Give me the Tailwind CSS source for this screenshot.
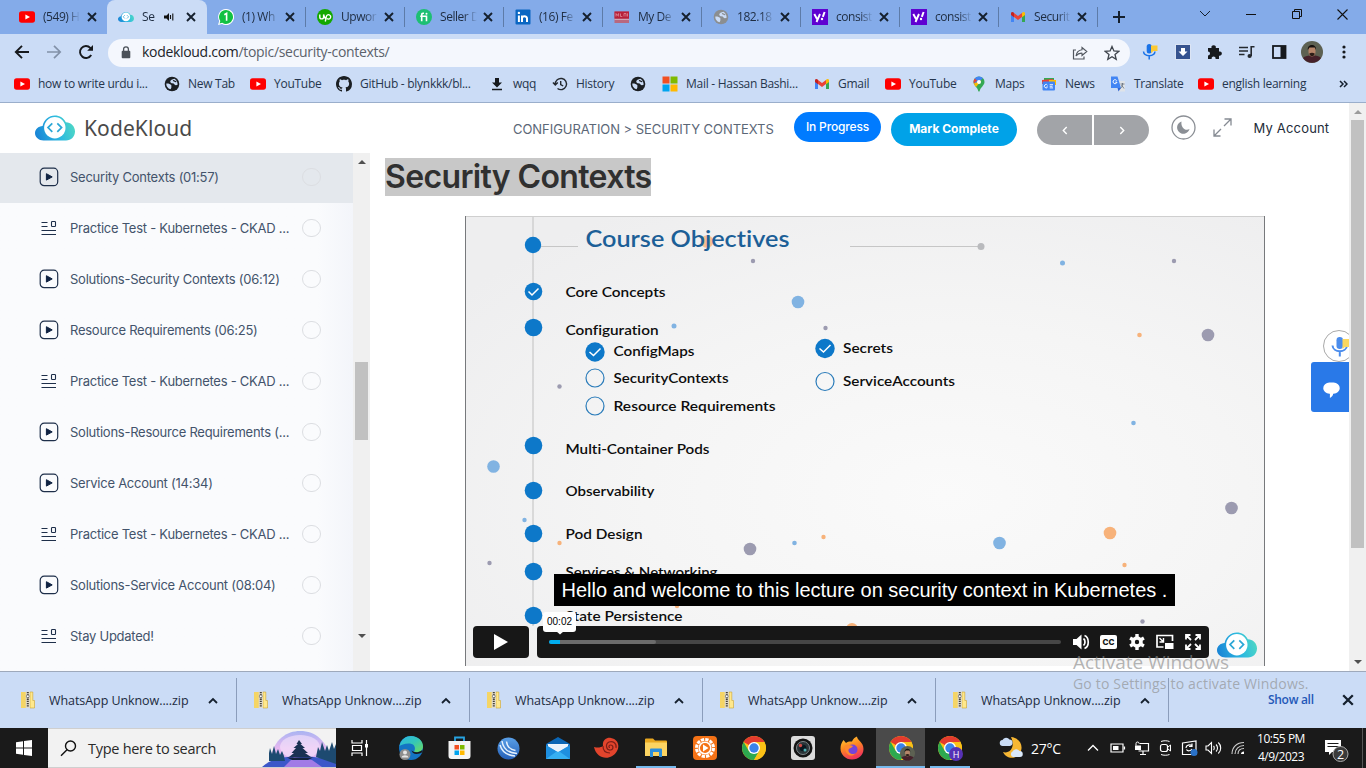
<!DOCTYPE html>
<html lang="en">
<head>
<meta charset="utf-8">
<title>Security Contexts - KodeKloud</title>
<script src="https://cdn.jsdelivr.net/npm/@tailwindcss/browser@4"></script>
</head>
<body class="w-[1366px] h-[768px] overflow-hidden bg-white font-['Open_Sans','Noto_Sans',sans-serif] text-[12px] text-[#1f2937]">

<svg width="0" height="0" class="absolute">
  <defs>
    <linearGradient id="kg" x1="0" y1="0.6" x2="1" y2="0.4"><stop offset="0" stop-color="#1a86d6"/><stop offset="0.55" stop-color="#2cb9e0"/><stop offset="1" stop-color="#4fd8c4"/></linearGradient>
    <linearGradient id="edg" x1="0" y1="0" x2="1" y2="1"><stop offset="0" stop-color="#2bb5e8"/><stop offset="0.5" stop-color="#35c6b8"/><stop offset="1" stop-color="#6fdc5a"/></linearGradient>
    <linearGradient id="bub" x1="0" y1="0" x2="0" y2="1"><stop offset="0" stop-color="#5aa0e8"/><stop offset="1" stop-color="#2560b8"/></linearGradient>
    <linearGradient id="ff" x1="0" y1="0" x2="0.4" y2="1"><stop offset="0" stop-color="#ffd43a"/><stop offset="0.5" stop-color="#ff8a1f"/><stop offset="1" stop-color="#f0365a"/></linearGradient>
    <linearGradient id="sky" x1="0" y1="0" x2="0" y2="1"><stop offset="0" stop-color="#a9b4f2"/><stop offset="0.5" stop-color="#e8b8f0"/><stop offset="1" stop-color="#c7a6ee"/></linearGradient>
    <radialGradient id="slide" cx="0.6" cy="0.62" r="0.75"><stop offset="0" stop-color="#fafafa"/><stop offset="0.5" stop-color="#f5f5f5"/><stop offset="1" stop-color="#eeeeef"/></radialGradient>
  </defs>
  <symbol id="cloud" viewBox="0 0 40 26">
    <path d="M8.500 25.500C3.800 25.500 0 22.300 0 18.300C0 14.500 3.300 11.300 7.600 11.100C8.800 4.700 13.800 0.500 19.800 0.500C24.800 0.500 28.800 3.200 30.800 7.300C36 7.300 40 11.500 40 16.500C40 21.500 36.200 25.500 31 25.500Z" fill="url(#kg)"/>
    <circle cx="19.800" cy="12.700" r="10.700" fill="#fff"/>
    <path d="M17.300 8.300L13 12.600L17.300 16.900M22.300 8.300L26.600 12.600L22.300 16.900" fill="none" stroke="#2ba7d6" stroke-width="1.700"/>
  </symbol>
  <symbol id="yt" viewBox="0 0 16 16"><rect y="2.300" width="16" height="11.400" rx="2.600" fill="#f00"/><path d="M6.400 5.500L11 8L6.400 10.500Z" fill="#fff"/></symbol>
  <symbol id="wa" viewBox="0 0 16 16"><path d="M8 0A8 8 0 1 1 4 14.900L0 16L1.200 12A8 8 0 0 1 8 0Z" fill="#fff"/><path d="M8 1.100A6.900 6.900 0 1 1 4.200 13.700L1.600 14.400L2.300 11.900A6.900 6.900 0 0 1 8 1.100Z" fill="#12c143"/><path d="M6.300 5.800L8.600 4.400V11.800" stroke="#fff" stroke-width="1.600" fill="none"/></symbol>
  <symbol id="up" viewBox="0 0 16 16"><circle cx="8" cy="8" r="8" fill="#14a800"/><path d="M2.800 5.500V8A1.900 1.900 0 0 0 6.600 8V5.500C7 7.500 8 9.300 9 10M8.300 12.500L9.300 7.600A2.200 2.200 0 1 1 10 9.500" stroke="#fff" stroke-width="1.400" fill="none"/></symbol>
  <symbol id="fi" viewBox="0 0 16 16"><circle cx="8" cy="8" r="8" fill="#1dbf73"/><path d="M5.700 12.300V5.900C5.700 4.600 6.500 4.100 8 4.200M4.200 7.200H10.500V12.300" stroke="#fff" stroke-width="1.600" fill="none"/><circle cx="10.500" cy="4.700" r="1" fill="#fff"/></symbol>
  <symbol id="in" viewBox="0 0 16 16"><rect x="0.500" y="0.500" width="15" height="15" rx="1" fill="#0a66c2"/><path d="M3.900 6.500V13M7 13V6.500M7 9.500C7 6.700 12 6.500 12 9.500V13" stroke="#fff" stroke-width="2" fill="none"/><circle cx="3.900" cy="3.900" r="1.200" fill="#fff"/></symbol>
  <symbol id="md" viewBox="0 0 16 16"><rect x="0.500" y="2.500" width="14.500" height="11.500" fill="#b8687f"/><rect x="0.500" y="2.500" width="14.500" height="7" fill="#b8203a"/><path d="M2 7.500V4.500L3.300 6.500L4.600 4.500V7.500M6.500 4.500V7.500H8.300M10 7.500V4.500H12V7.500M13.500 4.300V7.500" stroke="#e39aa6" stroke-width="0.700" fill="none"/><path d="M0.500 10.500H15" stroke="#d3a3b3" stroke-width="1"/></symbol>
  <symbol id="globe" viewBox="0 0 16 16"><circle cx="8" cy="8" r="7.300" fill="currentColor"/><path d="M2.300 7.500C4.500 7.300 6 7.800 7.500 9.300C6.800 10 8.300 11 6.500 13.300L4.600 12.400C3 11 2.200 9.500 2.300 7.500ZM10.500 2.700C8.500 3 6 4.200 6.300 6C7 8 9.800 6.700 10.300 8.300C11 9.700 13 9.500 13.700 8.500C13.500 5.800 12.300 3.700 10.500 2.700Z" fill="#cbdcf6"/><path d="M9 4.600C10.500 4.300 10.500 6 12.300 5.500" stroke="currentColor" stroke-width="1.200" fill="none"/></symbol>
  <symbol id="yh" viewBox="0 0 16 16"><rect width="16" height="16" fill="#5f01d1"/><path d="M2.300 5L5 10M8 5L4.500 13" stroke="#fff" stroke-width="1.900"/><path d="M12.600 3L10.800 7.800" stroke="#fff" stroke-width="2"/><circle cx="10" cy="10" r="1.200" fill="#fff"/></symbol>
  <symbol id="gm" viewBox="0 0 16 16"><path d="M1 4V13H4V6.500Z" fill="#4285f4"/><path d="M15 4V13H12V6.500Z" fill="#34a853"/><path d="M4 4V8L8 11L12 8V4L8 7Z" fill="#ea4335"/><path d="M1 4.500C1 2.900 2.600 2.500 4 3.800V8.200L1 6Z" fill="#c5221f"/><path d="M15 4.500C15 2.900 13.400 2.500 12 3.800V8.200L15 6Z" fill="#fbbc04"/></symbol>
  <symbol id="gh" viewBox="0 0 16 16"><path fill="#1b1f23" d="M8 0C3.580 0 0 3.580 0 8c0 3.540 2.290 6.530 5.470 7.590.4.070.550-.170.550-.380 0-.190-.010-.820-.010-1.490-2.010.370-2.530-.490-2.690-.940-.090-.230-.480-.940-.820-1.130-.280-.150-.680-.520-.010-.530.630-.010 1.080.580 1.230.820.720 1.210 1.870.870 2.330.660.070-.520.280-.870.510-1.070-1.780-.2-3.640-.890-3.640-3.950 0-.870.310-1.590.820-2.150-.080-.2-.360-1.020.080-2.120 0 0 .670-.210 2.200.820.640-.180 1.320-.270 2-.270s1.360.090 2 .270c1.530-1.040 2.200-.820 2.200-.820.440 1.100.160 1.920.080 2.120.510.560.820 1.270.820 2.150 0 3.070-1.870 3.750-3.650 3.950.290.250.540.730.540 1.480 0 1.070-.010 1.930-.010 2.200 0 .210.150.460.550.380A8.010 8.010 0 0 0 16 8c0-4.420-3.580-8-8-8Z"/></symbol>
  <symbol id="dl" viewBox="0 0 16 16"><path d="M6 2H10V6.500H13L8 11.500L3 6.500H6ZM3 12.800H13V14.300H3Z" fill="#16191d"/></symbol>
  <symbol id="hist" viewBox="0 0 16 16"><path d="M3.300 8.300A5.600 5.600 0 1 1 5.500 12.500M0.900 6.500L3.300 9L5.800 6.500M8.700 5V8.500L11.200 10" fill="none" stroke="#24292f" stroke-width="1.400"/></symbol>
  <symbol id="ms" viewBox="0 0 16 16"><path d="M0.500 0.500H7.500V7.500H0.500Z" fill="#f25022"/><path d="M8.500 0.500H15.500V7.500H8.500Z" fill="#7fba00"/><path d="M0.500 8.500H7.500V15.500H0.500Z" fill="#00a4ef"/><path d="M8.500 8.500H15.500V15.500H8.500Z" fill="#ffb900"/></symbol>
  <symbol id="map" viewBox="0 0 16 16"><path d="M8 0.500A5.500 5.500 0 0 0 2.500 6C2.500 9.500 6.500 11 7.500 15.500H8.500C9.500 11 13.500 9.500 13.500 6A5.500 5.500 0 0 0 8 0.500Z" fill="#34a853"/><path d="M3.500 9.300L12 2.200A5.500 5.500 0 0 0 3.700 2.700Z" fill="#4285f4"/><path d="M3.700 2.500A5.500 5.500 0 0 0 2.800 7.500L6 4.500Z" fill="#ea4335"/><path d="M2.800 7.500C3.300 9 4.300 10 5 11L10.500 4.500Z" fill="#fbbc04"/><circle cx="8" cy="6" r="2" fill="#fff"/></symbol>
  <symbol id="news" viewBox="0 0 16 16"><path d="M3 2H13V8H3Z" fill="#34a853"/><path d="M1 4L12 3V8H1Z" fill="#ea4335"/><path d="M8 4H15V9H8Z" fill="#fbbc04"/><rect x="1.500" y="5.500" width="12.500" height="9" rx="1" fill="#4285f4"/><path d="M6.500 9.300A1.700 1.700 0 1 0 6.500 11H5.300M8.700 8.700H12M8.700 10.300H11.500M8.700 11.900H12" stroke="#fff" stroke-width="0.900" fill="none"/></symbol>
  <symbol id="tr" viewBox="0 0 16 16"><path d="M6 5H15V15.500H8.500Z" fill="#dfe3e8"/><path d="M1 0.500H7.500L11 12H1Z" fill="#4285f4"/><path d="M7.500 12H11L8.500 15.500Z" fill="#3367d6"/><path d="M6.800 4.700A2 2 0 1 0 7 6.200H5.300" stroke="#fff" stroke-width="1" fill="none"/><path d="M10.500 8H14.500M12.500 7V8C12.500 10 11.500 11.500 10.500 12.500M11.500 9L14 12.500" stroke="#5f6b78" stroke-width="0.800" fill="none"/></symbol>
  <symbol id="x" viewBox="0 0 10 10"><path d="M1 1L9 9M9 1L1 9" stroke="#15202e" stroke-width="1.900"/></symbol>
  <symbol id="zip" viewBox="0 0 16 18"><path d="M1 1H12V17H1Z" fill="#f5d565"/><path d="M10 1H12.800V9.500H14.500V17H10Z" fill="#ffe88c" stroke="#cfa52e" stroke-width="0.600"/><rect x="5.700" y="0.500" width="4.200" height="16.500" fill="#e2dccb"/><path d="M7.800 1V16.500" stroke="#45413a" stroke-width="2" stroke-dasharray="1.300 0.900"/><circle cx="7.800" cy="5.300" r="1.400" fill="#fff" stroke="#444" stroke-width="0.600"/></symbol>
  <symbol id="play" viewBox="0 0 20 20"><rect x="1.200" y="1.200" width="17.500" height="17.500" rx="4" fill="none" stroke="#1e2f4a" stroke-width="1.200"/><path d="M7.400 6.700L13.200 9.900L7.400 13.100Z" fill="#0f2242" stroke="#0f2242" stroke-linejoin="round"/></symbol>
  <symbol id="quiz" viewBox="0 0 20 20"><path d="M2.500 4.500H8.500M2.500 8.500H8.500M2.500 12.500H17M2.500 16.500H17" stroke="#1e2f4a" stroke-width="1.200"/><rect x="12.500" y="3.500" width="4" height="5" rx="0.800" fill="none" stroke="#1e2f4a" stroke-width="1.100"/></symbol>
  <symbol id="chrome" viewBox="0 0 24 24"><circle cx="12" cy="12" r="12" fill="#fbc116"/><path d="M12 12L1.610 6A12 12 0 0 1 22.390 6H12Z" fill="#e33b2e"/><path d="M1.610 6A12 12 0 0 0 12 24L17.200 15L12 12L6.800 15Z" fill="#2da94f"/><path d="M12 6H22.390A12 12 0 0 1 12 24L17.200 15Z" fill="#fbc116"/><circle cx="12" cy="12" r="6" fill="#fff"/><circle cx="12" cy="12" r="4.700" fill="#3b82ea"/></symbol>
  <symbol id="face" viewBox="0 0 22 22"><circle cx="11" cy="11" r="11" fill="#5d6152"/><path d="M2 17C5 13.500 17 13 20 17A11 11 0 0 1 2 17Z" fill="#45202a"/><path d="M7.500 8C7.500 4 14.500 4 14.500 8V11C14.500 17 7.500 17 7.500 11Z" fill="#b58468"/><path d="M6.800 9C5.800 2.500 15.800 2 15 9L13.800 6.500H8.500Z" fill="#17120f"/><path d="M8.300 12.500C10 11.500 12 11.500 13.700 12.500C13.500 16 8.700 16 8.300 12.500Z" fill="#2c1c17"/></symbol>
  <symbol id="mic" viewBox="0 0 16 16"><rect x="4.700" y="0" width="5" height="9.500" rx="2.500" fill="#1a73e8"/><path d="M1.500 7.500C2 13 12.500 13 13 7.500M7.200 11.500V15.500" stroke="#1a73e8" stroke-width="1.500" fill="none"/><path d="M9 1.500H15.500V7H11.500L9 9Z" fill="#fcc934"/></symbol>
</svg>

<div class="flex flex-col w-[1366px] h-[768px]">

  <div class="h-[34px] bg-[#84abe9] flex pl-2 shrink-0">
    <div id="tabs" class="flex h-full w-[1089px] shrink-0"></div>
    <div class="flex items-center h-full flex-1">
      <svg class="ml-[16px]" width="12" height="12" viewBox="0 0 12 12"><path d="M6 0V12M0 6H12" stroke="#15202e" stroke-width="2"/></svg>
      <svg class="ml-[74px] mb-[6px]" width="12" height="8" viewBox="0 0 12 8"><path d="M1 1L6 6L11 1" stroke="#15202e" fill="none"/></svg>
      <svg class="ml-[34px] mb-[6px]" width="12" height="10" viewBox="0 0 12 10"><path d="M1 5.500H11" stroke="#111"/></svg>
      <svg class="ml-[34px] mb-[6px]" width="12" height="12" viewBox="0 0 12 12"><path d="M1.500 3.500H8.500V10.500H1.500ZM3.500 3.500V1.500H10.500V8.500H8.500" stroke="#111" fill="none"/></svg>
      <svg class="ml-[34px] mb-[6px]" width="11" height="11" viewBox="0 0 11 11"><path d="M0.500 0.500L10.500 10.500M10.500 0.500L0.500 10.500" stroke="#111" stroke-width="1.100"/></svg>
    </div>
  </div>

  <div class="h-[36px] bg-[#cbdcf6] flex items-center shrink-0 pl-[14px]">
    <svg width="16" height="16" viewBox="0 0 16 16"><path d="M15 8H2M8 1.800L1.800 8L8 14.200" stroke="#16191d" stroke-width="1.900" fill="none"/></svg>
    <svg class="ml-[16px]" width="16" height="16" viewBox="0 0 16 16"><path d="M1 8H14M8 1.800L14.200 8L8 14.200" stroke="#8291a8" stroke-width="1.700" fill="none"/></svg>
    <svg class="ml-[16px]" width="16" height="16" viewBox="0 0 16 16"><path d="M13.200 11A6 6 0 1 1 12.300 3.800L14 5.500" stroke="#16191d" stroke-width="1.900" fill="none"/><path d="M15 1V6.800H9.200Z" fill="#16191d"/></svg>
    <div class="ml-[14px] w-[1022px] h-[28px] mt-[1px] rounded-full bg-[#f4f7fd] flex items-center pl-[13px]">
      <svg width="10" height="13" viewBox="0 0 10 13"><rect x="0.700" y="4.800" width="8.600" height="7.500" rx="1" fill="#4b5159"/><path d="M2.600 5V3.200A2.400 2.400 0 0 1 7.400 3.200V5" stroke="#4b5159" stroke-width="1.300" fill="none"/></svg>
      <div class="ml-[11px] mb-[2px] text-[14px] tracking-[-0.310px] whitespace-nowrap text-[#5b626b]"><span class="text-[#20242a]">kodekloud.com</span>/topic/security-contexts/</div>
      <svg class="ml-auto mr-[16px]" width="16" height="16" viewBox="0 0 16 16"><path d="M4 5H1.500V14H12V11.500" stroke="#50565e" stroke-width="1.200" fill="none"/><path d="M10 2.500L14.800 6.500L10 10.500V8.200C7.500 8 5.500 9 4 11C4.500 7.500 6.500 5.200 10 4.800Z" stroke="#50565e" stroke-width="1.100" fill="none"/></svg>
      <svg class="mr-[10px]" width="16" height="16" viewBox="0 0 16 16"><path d="M8 1.500L9.900 6L14.700 6.400L11 9.500L12.200 14.300L8 11.700L3.800 14.300L5 9.500L1.300 6.400L6.100 6Z" stroke="#3e444c" stroke-width="1.300" fill="none"/></svg>
    </div>
    <svg class="ml-[12px]" width="16" height="16"><use href="#mic"/></svg>
    <svg class="ml-[17px]" width="16" height="16" viewBox="0 0 16 16"><rect width="16" height="16" fill="#dbe4f4"/><rect x="1" y="1" width="14" height="14" fill="#36538f"/><path d="M6 4H10V7.500H12.500L8 12L3.500 7.500H6Z" fill="#fff"/></svg>
    <svg class="ml-[15px]" width="17" height="16" viewBox="0 0 17 16"><path d="M2 4H5.500A2.200 2.200 0 1 1 9.800 4H13V7.500A2.200 2.200 0 1 1 13 11.700V15H9.500A2 2 0 1 0 5.700 15H2V11.500A2 2 0 1 0 2 7.500Z" fill="#16191d"/></svg>
    <svg class="ml-[15px]" width="17" height="14" viewBox="0 0 17 14"><path d="M1 2.500H10M1 6H10M1 9.500H6.500" stroke="#24292f" stroke-width="1.600"/><path d="M13.200 11V1.800H16.500" stroke="#24292f" stroke-width="1.600" fill="none"/><circle cx="11.600" cy="11" r="2.100" fill="#24292f"/></svg>
    <svg class="ml-[17px]" width="15" height="14" viewBox="0 0 15 14"><rect x="1" y="1" width="12.500" height="12" fill="none" stroke="#16191d" stroke-width="1.800"/><rect x="8.500" y="1" width="5" height="12" fill="#16191d"/></svg>
    <svg class="ml-[14px]" width="22" height="22"><use href="#face"/></svg>
    <svg class="ml-[19px]" width="4" height="16" viewBox="0 0 4 16"><g fill="#16191d"><circle cx="2" cy="3" r="1.600"/><circle cx="2" cy="8" r="1.600"/><circle cx="2" cy="13" r="1.600"/></g></svg>
  </div>

  <div class="h-[33px] bg-[#cbdcf6] border-b border-[#9aaecb] flex items-center shrink-0 pl-[14px] pb-[4px]">
    <div id="marks" class="flex items-center w-[1325px]"></div>
    <svg width="9" height="8" viewBox="0 0 9 8"><path d="M1 1L4 4L1 7M5 1L8 4L5 7" stroke="#15202e" stroke-width="1.500" fill="none"/></svg>
  </div>

  <div class="relative h-[568px] flex shrink-0 font-[Inter,sans-serif]">
    <div class="flex flex-col w-[1349px]">
      <header class="h-[50px] flex items-center pl-[35px] bg-white text-[13px] shrink-0">
        <svg width="40" height="26"><use href="#cloud"/></svg>
        <div class="ml-[9px] w-[429px] text-[21px] leading-none text-[#4a4a4a] font-['Noto_Sans',sans-serif] tracking-[0.100px]">KodeKloud</div>
        <div class="w-[281px] mt-[3px] text-[#5b6777] text-[13px] tracking-[-0.050px] whitespace-nowrap">CONFIGURATION &gt; SECURITY CONTEXTS</div>
        <div class="w-[87px] h-[30px] -mt-[2px] rounded-full bg-[#007bff] text-white text-[12px] font-medium tracking-[-0.150px] flex items-center justify-center">In Progress</div>
        <div class="ml-[10px] w-[126px] h-[33px] mt-[3px] rounded-full bg-[#00a2e8] text-white text-[12px] font-bold flex items-center justify-center pb-[1px]">Mark Complete</div>
        <div class="ml-[20px] mt-[4px] flex gap-[2px]">
          <div class="w-[55px] h-[30px] rounded-l-full bg-[#a2a4a8] flex items-center justify-center"><svg width="6" height="9" viewBox="0 0 6 9"><path d="M4.700 1L1.300 4.500L4.700 8" stroke="#fff" stroke-width="1.400" fill="none"/></svg></div>
          <div class="w-[55px] h-[30px] rounded-r-full bg-[#a2a4a8] flex items-center justify-center"><svg width="6" height="9" viewBox="0 0 6 9"><path d="M1.300 1L4.700 4.500L1.300 8" stroke="#fff" stroke-width="1.400" fill="none"/></svg></div>
        </div>
        <svg class="ml-[22px] -mt-[2px]" width="25" height="25" viewBox="0 0 25 25"><circle cx="12.500" cy="12.500" r="11.500" fill="none" stroke="#8b8f95" stroke-width="1.300"/><path d="M10.500 6.500A6.300 6.300 0 1 0 18.500 14C15 16.500 9.500 13 10.500 6.500Z" fill="#8b8f95"/></svg>
        <svg class="ml-[17px] -mt-[2px]" width="19" height="19" viewBox="0 0 19 19"><path d="M11.500 1H18V7.500M18 1L11 8M8 11L1 18M1 11.500V18H7.500" stroke="#858a92" stroke-width="1.300" fill="none"/></svg>
        <div class="ml-[21.500px] mt-[1px] text-[13px] tracking-[0.180px] text-[#222b38] whitespace-nowrap">My Account</div>
      </header>
      <div class="flex flex-1 min-h-0">
        <div id="side" class="w-[353px] h-[518px] bg-linear-to-r from-[#fafbfd] from-90% to-[#f3f5fa] flex flex-col gap-[1px] overflow-hidden"></div>
        <div class="w-[17px] h-[518px] bg-[#f0f0f0] flex flex-col items-center">
          <svg class="mt-[7px]" width="8" height="4" viewBox="0 0 8 4"><path d="M4 0L8 4H0Z" fill="#505050"/></svg>
          <div class="mt-[198px] w-[13px] h-[78px] bg-[#c1c1c1]"></div>
          <svg class="mt-[194px]" width="8" height="4" viewBox="0 0 8 4"><path d="M0 0H8L4 4Z" fill="#505050"/></svg>
        </div>
        <main class="flex-1 pl-[15px] pt-[5px]">
          <h1 class="w-[266px] h-[38px] bg-[#c8c8c8] text-[32px] leading-[38px] font-semibold text-[#303030] whitespace-nowrap tracking-[-0.640px]">Security Contexts</h1>
          <div class="relative mt-[20px] ml-[80px] w-[800px] h-[450px]">
            <svg width="800" height="450" viewBox="465 216 800 450" font-family="Lato, sans-serif" font-weight="600" class="[font-variant-ligatures:none]">
              <rect x="465" y="216" width="800" height="450" fill="url(#slide)"/>
              <path d="M465 216.500H1265" stroke="#cfcfcf"/><path d="M465.500 216V666M1264.500 216V666" stroke="#77797c"/>
              <path d="M533 217V626" stroke="#cbcbcb" stroke-width="1.300"/><path d="M541 246.500H578M850 246.500H978" stroke="#c6c6c6"/>
              <circle cx="981" cy="246.500" r="3.500" fill="#b9babd"/>
              <g fill="#81b3e2"><circle cx="798" cy="302" r="6.300"/><circle cx="674" cy="326" r="2.500"/><circle cx="1062.500" cy="263" r="2.500"/><circle cx="1133.500" cy="423" r="2.300"/><circle cx="493.500" cy="466.500" r="6.300"/><circle cx="524.500" cy="520" r="2.200"/><circle cx="999.500" cy="543" r="6.300"/><circle cx="794.500" cy="543" r="2.300"/></g>
              <g fill="#9c9bb0"><circle cx="1208" cy="335" r="6.300"/><circle cx="1231.500" cy="508" r="6.300"/><circle cx="750" cy="549" r="6.300"/><circle cx="753" cy="261" r="2.200"/><circle cx="559.500" cy="386.500" r="2.200"/><circle cx="825.500" cy="328" r="2.200"/><circle cx="1174" cy="261" r="2.200"/><circle cx="489.500" cy="563" r="2.200"/><circle cx="1142.500" cy="621.500" r="2.200"/></g>
              <g fill="#f7b27a"><circle cx="707" cy="241.500" r="6.300" opacity="0.800"/><circle cx="1110" cy="533" r="6.300"/><circle cx="1139.500" cy="335" r="2.300"/><circle cx="823.500" cy="537" r="2.200"/><circle cx="1124.500" cy="565" r="2.200"/><circle cx="559.500" cy="543" r="2.200"/><circle cx="677" cy="606" r="2.200"/><circle cx="852" cy="629" r="6"/></g>
              <g fill="#0d78c9"><circle cx="533" cy="245" r="8.200"/><circle cx="533.500" cy="291.500" r="8.800"/><circle cx="533.500" cy="327.500" r="8.800"/><circle cx="533.500" cy="445.500" r="8.800"/><circle cx="533.500" cy="490.500" r="8.800"/><circle cx="533.500" cy="533.500" r="8.800"/><circle cx="533.500" cy="571.500" r="8.800"/><circle cx="533.500" cy="615.500" r="8.800"/><circle cx="595" cy="352" r="9.700"/><circle cx="825" cy="348.500" r="9.700"/></g>
              <path d="M528.500 291.500L532 295L538.500 288.500M589.500 352L593.500 355.500L600.500 348.500M819.500 348.500L823.500 352L830.500 345" stroke="#fff" stroke-width="1.500" fill="none"/>
              <g fill="none" stroke="#2b7cba" stroke-width="1.200"><circle cx="595" cy="378" r="9"/><circle cx="595" cy="406" r="9"/><circle cx="825" cy="381.500" r="9"/></g>
              <text x="585.500" y="246.500" font-size="23" fill="#1c5f97" textLength="204" lengthAdjust="spacingAndGlyphs">Course Objectives</text>
              <g font-size="13.500" fill="#0d0d0d">
                <text x="565.500" y="297" textLength="100" lengthAdjust="spacingAndGlyphs">Core Concepts</text>
                <text x="565.500" y="334.500" textLength="93" lengthAdjust="spacingAndGlyphs">Configuration</text>
                <text x="613.500" y="356" textLength="81" lengthAdjust="spacingAndGlyphs">ConfigMaps</text>
                <text x="613.500" y="382.500" textLength="115" lengthAdjust="spacingAndGlyphs">SecurityContexts</text>
                <text x="613.500" y="411" textLength="162" lengthAdjust="spacingAndGlyphs">Resource Requirements</text>
                <text x="843" y="353.400" textLength="50" lengthAdjust="spacingAndGlyphs">Secrets</text>
                <text x="843" y="386" textLength="112" lengthAdjust="spacingAndGlyphs">ServiceAccounts</text>
                <text x="565.500" y="453.500" textLength="144" lengthAdjust="spacingAndGlyphs">Multi-Container Pods</text>
                <text x="565.500" y="496" textLength="89" lengthAdjust="spacingAndGlyphs">Observability</text>
                <text x="565.500" y="539" textLength="77" lengthAdjust="spacingAndGlyphs">Pod Design</text>
                <text x="565.500" y="577" textLength="152" lengthAdjust="spacingAndGlyphs">Services &amp; Networking</text>
                <text x="565.500" y="621" textLength="117" lengthAdjust="spacingAndGlyphs">State Persistence</text>
              </g>
            </svg>
            <div class="absolute left-[89px] top-[358px] w-[621px] h-[32px] bg-black text-white font-['Liberation_Sans',sans-serif] text-[20px] leading-[32px] pl-[7.500px] whitespace-nowrap">Hello and welcome to this lecture on security context in Kubernetes .</div>
            <div class="absolute left-[8px] top-[410px] flex items-start gap-[8px]">
              <div class="w-[56px] h-[32px] rounded bg-[#171717] flex items-center justify-center"><svg width="16" height="18" viewBox="0 0 16 18"><path d="M1 1L15 9L1 17Z" fill="#fff"/></svg></div>
              <div class="w-[672px] h-[32px] rounded bg-[#171717] flex items-center pl-[12px]">
                <div class="w-[512px] h-[4px] rounded-full bg-[#464646] flex overflow-hidden"><div class="w-[11px] bg-[#00adef]"></div><div class="w-[96px] bg-[#6b6b6b] rounded-r-full"></div></div>
                <svg class="ml-[11px]" width="18" height="18" viewBox="0 0 18 18"><path d="M1 6H4.500L9.500 1.500V16.500L4.500 12H1Z" fill="#fff"/><path d="M11.500 5.500C13.500 7 13.500 11 11.500 12.500M12.500 2.500C17.500 4.500 17.500 13.500 12.500 15.500" stroke="#fff" stroke-width="1.700" fill="none"/></svg>
                <div class="ml-[10px] w-[17px] h-[14px] rounded-[2px] bg-white text-[#171717] text-[8px] leading-[14px] font-extrabold text-center">CC</div>
                <svg class="ml-[12px]" width="16" height="16" viewBox="0 0 16 16"><circle cx="8" cy="8" r="4" fill="none" stroke="#fff" stroke-width="3.600"/><path d="M8 0V3M8 13V16M1.100 4L3.700 5.500M12.300 10.500L14.900 12M1.100 12L3.700 10.500M12.300 5.500L14.900 4" stroke="#fff" stroke-width="3.400"/></svg>
                <svg class="ml-[11px]" width="18" height="16" viewBox="0 0 18 16"><path d="M7.500 13H1V1.500H16.500V7" stroke="#fff" stroke-width="1.700" fill="none"/><rect x="9" y="9" width="8.500" height="6" fill="#fff"/><path d="M3.500 4L7 7.500M7.500 4V8H3.500" stroke="#fff" stroke-width="1.400" fill="none"/></svg>
                <svg class="ml-[11px]" width="16" height="16" viewBox="0 0 16 16"><path d="M1 5.500V1H5.500M1 1L6 6M10.500 1H15V5.500M15 1L10 6M15 10.500V15H10.500M15 15L10 10M5.500 15H1V10.500M1 15L6 10" stroke="#fff" stroke-width="1.800" fill="none"/></svg>
              </div>
              <svg width="40" height="26" class="mt-[6px]"><use href="#cloud"/></svg>
            </div>
            <div class="absolute left-[78px] top-[396px] w-[33px] h-[20px] rounded-[3px] bg-white text-black font-['Liberation_Sans',sans-serif] text-[10px] leading-[20px] text-center">00:02</div>
            <svg class="absolute left-[91px] top-[415px]" width="8" height="4" viewBox="0 0 8 4"><path d="M0 0H8L4 3.500Z" fill="#fff"/></svg>
          </div>
        </main>
      </div>
    </div>
    <div class="w-[17px] bg-[#f0f0f0] flex flex-col items-center">
      <svg class="mt-[7px]" width="8" height="4" viewBox="0 0 8 4"><path d="M4 0L8 4H0Z" fill="#9b9b9b"/></svg>
      <div class="mt-[6px] w-[13px] h-[428px] bg-[#c1c1c1]"></div>
      <svg class="mt-[112px]" width="8" height="4" viewBox="0 0 8 4"><path d="M0 0H8L4 4Z" fill="#505050"/></svg>
    </div>
    <svg class="absolute left-[1322px] top-[226px]" width="27" height="34" viewBox="0 0 27 34"><circle cx="17" cy="17" r="15.500" fill="#fff" stroke="#a9a9a9"/><rect x="14.500" y="8" width="6.500" height="12" rx="3.200" fill="#4a8cec"/><path d="M10.500 16.500C11 24 24.500 24 25 16.500M17.800 22V27.500" stroke="#4a8cec" stroke-width="2" fill="none"/><path d="M20.500 10H27V18H23L20.500 20Z" fill="#fbd75e"/></svg>
    <div class="absolute left-[1311px] top-[259px] w-[38px] h-[50px] rounded-l-[3px] bg-[#2979e8] flex items-center justify-center pt-[5px] pl-[2px]"><svg width="17" height="16" viewBox="0 0 16 15"><path d="M6 0.500H10A5.500 5 0 0 1 10 11H9.500C9.500 12.500 8.500 14 6.500 15V11H6A5.500 5 0 0 1 6 0.500Z" fill="#fff"/></svg></div>
  </div>

  <div class="h-[57px] bg-[#cbdcf6] border-t border-[#9ea9bb] flex items-center shrink-0">
    <div id="downs" class="flex w-[1268px]"></div>
    <div class="w-[74px] text-[12px] font-semibold text-[#2458b8] tracking-[-0.300px] whitespace-nowrap">Show all</div>
    <svg width="12" height="12"><use href="#x"/></svg>
  </div>

  <div class="h-[40px] bg-[#1a1a1a] flex shrink-0 text-white">
    <div class="w-[48px] flex items-center justify-center"><svg width="16" height="16" viewBox="0 0 16 16"><path d="M0 2.200L7 1.200V7.500H0ZM8 1L16 0V7.500H8ZM0 8.500H7V14.800L0 13.800ZM8 8.500H16V16L8 15Z" fill="#fff"/></svg></div>
    <div class="w-[288px] bg-[#f2f2f2] border-y border-[#cfcfcf] flex items-center pl-[12px]">
      <svg width="17" height="17" viewBox="0 0 17 17"><circle cx="10.500" cy="6" r="5" fill="none" stroke="#111" stroke-width="1.400"/><path d="M7 9.700L1 15.700" stroke="#111" stroke-width="1.500"/></svg>
      <div class="ml-[11px] text-[14.500px] text-[#2a2a2a] tracking-[-0.280px] whitespace-nowrap pt-[1px]">Type here to search</div>
      <svg class="ml-auto" width="74" height="38" viewBox="0 0 74 38"><path d="M8 30C12 10 25 2 38 2C54 2 64 12 70 30L60 38H12Z" fill="url(#sky)"/><ellipse cx="38" cy="18" rx="20" ry="12" fill="#f6e6fb" opacity="0.600"/><path d="M0 38C8 31 18 27 38 28C55 27 66 30 74 34V38Z" fill="#3c57c9"/><path d="M22 38L32 28L50 31L60 38Z" fill="#a17be6"/><path d="M7 32V24L8 19L10 25L12 17L14 25L16 20L18 26L20 22L22 27L23 32ZM54 28L56 18L58 22L60 13L63 22L65 16L67 22L70 13L72 20L74 15V35Z" fill="#1d4a70"/><path d="M37 11L40 15H38.500L43 19H40.500L46 24H43L49 28H27L32 24H29.500L34 19H31.500L36 15H34.500Z" fill="#1a3153"/><path d="M25 28.500H51L46 31H30Z" fill="#14223c"/></svg>
    </div>
    <div class="w-[50px] flex items-center justify-center"><svg class="mr-[3px]" width="17" height="16" viewBox="0 0 17 16"><path d="M1 0V3H11V0M1 16V13H11V16M1.500 5.500H10.500V10.500H1.500ZM15.500 0V16" stroke="#fff" stroke-width="1.200" fill="none"/><rect x="14" y="4" width="3" height="3.500" fill="#fff"/></svg></div>

    <div class="w-[49px] flex items-center justify-center"><svg width="26" height="24" viewBox="0 0 26 24"><circle cx="13" cy="12" r="12" fill="#1474c4"/><path d="M1.500 10C3 3 8 0 13 0C20 0 25.500 5 25 11C24.500 16 19 17 16 15.500C18 13 17 8 12 7.500C7 7 3 9 1.500 10Z" fill="url(#edg)"/><path d="M24.500 16C19 19.500 14 18 13.500 14C14 16 19 18 24.500 14Z" fill="#1a1a1a"/><circle cx="7" cy="18.500" r="5.500" fill="#8e8e8e"/><circle cx="7" cy="16.500" r="2" fill="#e6e6e6"/><path d="M3.500 21.500C4 18.500 10 18.500 10.500 21.500Z" fill="#e6e6e6"/></svg></div>
    <div class="w-[49px] flex items-center justify-center"><svg width="23" height="24" viewBox="0 0 23 24"><path d="M7 6V1.500H16V6" stroke="#27a3e2" stroke-width="1.800" fill="none"/><path d="M0.500 5H22.500V20A3 3 0 0 1 19.500 23H3.500A3 3 0 0 1 0.500 20Z" fill="#f4f4f4"/><path d="M6.500 9H11V13.500H6.500Z" fill="#f25022"/><path d="M12 9H16.500V13.500H12Z" fill="#7fba00"/><path d="M6.500 14.500H11V19H6.500Z" fill="#00a4ef"/><path d="M12 14.500H16.500V19H12Z" fill="#ffb900"/></svg></div>
    <div class="w-[49px] flex items-center justify-center"><svg width="23" height="23" viewBox="0 0 23 23"><circle cx="11.500" cy="11.500" r="11" fill="url(#bub)"/><path d="M5 4C6 11 11 16 20 16.500M9.500 4.500C10 9 13 12.500 18.500 13.500M3 8C5 15 11 18.500 18 19" stroke="#e4f0fd" stroke-width="1.500" fill="none"/></svg></div>
    <div class="w-[49px] flex items-center justify-center"><svg width="24" height="22" viewBox="0 0 24 22"><path d="M0 7L12 0L24 7V22H0Z" fill="#0b66b5"/><path d="M2 7H22V14L12 18L2 14Z" fill="#f5f9fd"/><path d="M0 8L12 15L24 8V22H0Z" fill="#1e8fe0"/><path d="M0 22L12 13.500L24 22Z" fill="#36b0f3"/><path d="M1 7.500H23L12 15Z" fill="#e9f3fc"/></svg></div>
    <div class="w-[49px] flex items-center justify-center"><svg width="25" height="22" viewBox="0 0 25 22"><path d="M0 10C4 11 7 10.500 9 9C8 3 13 0 17 1C24 2 26 9 23 14C20 20 13 22 8 20C3 18 1 14 0 10Z" fill="#e2442c"/><path d="M16 10.500C14.500 10.500 14.500 8 16.500 8C19.500 8 20 12.500 16.500 13C12 13.500 11 7 15 5C19 3.500 23 6.500 22 11M9 9C9 14 12 16 16 16" stroke="#7e1f18" stroke-width="1.200" fill="none"/></svg></div>
    <div class="w-[49px] flex flex-col items-center"><svg class="mt-[10px]" width="22" height="19" viewBox="0 0 22 19"><path d="M0 1.500A1 1 0 0 1 1 0.500H8L10 2.500H21A1 1 0 0 1 22 3.500V18H0Z" fill="#e9a820"/><rect y="4.500" width="22" height="13.500" fill="#fcd462"/><path d="M5 19V11.500A1 1 0 0 1 6 10.500H16A1 1 0 0 1 17 11.500V19H14V14H8V19Z" fill="#2c8edb"/></svg><div class="mt-auto w-[40px] h-[2px] bg-[#76b9ed]"></div></div>
    <div class="w-[49px] flex items-center justify-center"><svg width="24" height="24" viewBox="0 0 24 24"><rect width="24" height="24" rx="4" fill="#f47216"/><circle cx="12" cy="12" r="8.500" fill="none" stroke="#fff" stroke-width="3" stroke-dasharray="3.300 1.150"/><circle cx="12" cy="12" r="5.800" fill="none" stroke="#fff" stroke-width="1.500"/><path d="M10 8.500L15.500 12L10 15.500Z" fill="#fff"/></svg></div>
    <div class="w-[49px] flex items-center justify-center"><svg width="24" height="24"><use href="#chrome"/></svg></div>
    <div class="w-[49px] flex items-center justify-center"><svg width="24" height="24" viewBox="0 0 24 24"><rect width="24" height="24" rx="3" fill="#dcdcdc"/><circle cx="12" cy="12" r="9.500" fill="#141414"/><circle cx="12" cy="12" r="6.500" fill="#2b3539" stroke="#7d8588"/><circle cx="12" cy="12" r="3.300" fill="#0a1820"/><circle cx="9.500" cy="9.500" r="1.700" fill="#cf4a44"/><circle cx="14" cy="14" r="1.500" fill="#4fb2b5"/></svg></div>
    <div class="w-[49px] flex items-center justify-center"><svg width="24" height="24" viewBox="0 0 24 24"><path d="M3.500 4L6 7C8 5 11 5.500 12 5.500C13 3 15 1 17 0.500C17 4 23.500 6 23.500 13C23.500 19 18.500 23.500 12 23.500C5.500 23.500 0.500 18.500 0.500 12.500C0.500 9 1.500 6.500 3.500 4Z" fill="url(#ff)"/><circle cx="12.500" cy="13.500" r="5" fill="#7544d9"/><path d="M5 9.500C8 8 10 9.500 13 10C11 13 9 11.500 8.500 14C8 17 12 19 15 17.500C12 22 4 19 5 9.500Z" fill="#ff8a2e"/></svg></div>
    <div class="w-[49px] flex flex-col items-center bg-[#4a4a4a]"><svg class="mt-[8px] ml-[3px] shrink-0" width="26" height="26" viewBox="0 0 26 26"><use href="#chrome" width="24" height="24"/><use href="#face" x="11" y="10" width="15" height="15"/></svg><div class="mt-auto w-[49px] h-[2px] bg-[#76b9ed]"></div></div>
    <div class="w-[49px] flex flex-col items-center"><svg class="mt-[8px] ml-[3px] shrink-0" width="26" height="26" viewBox="0 0 26 26"><use href="#chrome" width="24" height="24"/><circle cx="18" cy="18" r="7" fill="#5631b5"/><text x="18" y="21.500" text-anchor="middle" font-size="9" fill="#fff" font-family="Open Sans">H</text></svg><div class="mt-auto w-[40px] h-[2px] bg-[#76b9ed]"></div></div>

    <div class="ml-[25px] w-[24px] flex items-center"><svg width="24" height="24" viewBox="0 0 24 24"><path d="M12 1C21 2 25 10 21 17C17 24 7 23 4 16C10 18 17 12 12 1Z" fill="#f7b733"/><path d="M4 10A3 3 0 0 1 3.500 4A4 4 0 0 1 10.500 3.500A3.300 3.300 0 0 1 11 10Z" fill="#c9dcf5"/><path d="M14 21A3 3 0 0 1 13.500 15.500A4 4 0 0 1 20.500 15A3 3 0 0 1 21 21Z" fill="#d9e8fa"/></svg></div>
    <div class="ml-[8px] w-[54px] flex items-center text-[14px] tracking-[-0.250px]">27°C</div>
    <div class="flex items-center">
      <svg class="ml-[2px]" width="12" height="8" viewBox="0 0 12 8"><path d="M1 6.500L6 1.500L11 6.500" stroke="#fff" stroke-width="1.300" fill="none"/></svg>
      <svg class="ml-[11px]" width="16" height="10" viewBox="0 0 16 10"><path d="M1 1H13V9H1ZM14.500 3.500V6.500" stroke="#fff" stroke-width="1.200" fill="none"/><rect x="3" y="3" width="5.500" height="4" fill="#fff"/></svg>
      <svg class="ml-[8px]" width="16" height="15" viewBox="0 0 16 15"><path d="M5.500 2.500H14.500V10H4.500M9 10V13M6 13.500H12" stroke="#fff" stroke-width="1.200" fill="none"/><rect x="1" y="4.500" width="6" height="4.500" fill="#fff"/><path d="M2 4.500V2.500A1.500 1.500 0 0 1 5 2.500" stroke="#fff" fill="none"/></svg>
      <svg class="ml-[9px]" width="13" height="16" viewBox="0 0 13 16"><path d="M2 1.500C4.500 0.500 8 0.500 10.500 1.500M2 14.500C4.500 15.500 8 15.500 10.500 14.500" stroke="#fff" fill="none"/><rect x="1.500" y="4.500" width="7" height="7" rx="2" stroke="#fff" stroke-width="1.200" fill="none"/><path d="M9 7L11.500 5V11L9 9" stroke="#fff" fill="none"/></svg>
      <svg class="ml-[9px]" width="17" height="16" viewBox="0 0 17 16"><path d="M1.500 3L15 1V14.500H1.500Z" stroke="#fff" stroke-width="1.200" fill="none"/><path d="M5 8C5 5 9 4 11 6M11 3.500V6.500H8M11 9C10 11 6.500 11.500 5.500 9.500" stroke="#fff" stroke-width="1.200" fill="none"/><circle cx="13" cy="12.500" r="3.500" fill="#2a72c8"/></svg>
      <svg class="ml-[7px]" width="17" height="14" viewBox="0 0 17 14"><path d="M1 5H3L6.500 1.500V12.500L3 9H1ZM8.500 5C9.500 6 9.500 8 8.500 9M11 3.500C13 5.500 13 8.500 11 10.500M13.300 1.500C16.500 4.500 16.500 9.500 13.300 12.500" stroke="#fff" stroke-width="1.100" fill="none"/></svg>
      <svg class="ml-[9px]" width="14" height="14" viewBox="0 0 14 14"><path d="M1 13C1 6 6 1.500 13 1.500M4 13C4 8 8 4.500 13 4.500M7 13C7 9.500 9.500 7.500 13 7.500" stroke="#cfcfcf" stroke-width="1.100" fill="none"/><path d="M10 13C10 11.500 11 10.500 13 10.500V13Z" fill="#fff"/></svg>
    </div>
    <div class="ml-[8px] w-[56px] flex flex-col items-center justify-center text-[12px] leading-[18px] tracking-[-0.480px] whitespace-nowrap"><span>10:55 PM</span><span>4/9/2023</span></div>
    <div class="ml-[14px] flex items-center"><svg width="28" height="28" viewBox="0 0 28 28"><path d="M2 6H18V18H9L6 21V18H2Z" fill="#fff"/><path d="M4.500 9.500H15.500M4.500 12.500H15.500" stroke="#1a1a1a" stroke-width="1.200"/><circle cx="17.500" cy="20" r="7.500" fill="#3a3a3a" stroke="#aaa"/><text x="17.500" y="24.500" text-anchor="middle" font-size="12.500" fill="#fff" font-family="Open Sans">2</text></svg></div>
    <div class="ml-auto mr-[3px] w-px bg-[#565656]"></div>
  </div>
</div>

<div class="absolute left-[1073px] top-[650px] text-[#8c8c8c]/65 whitespace-nowrap">
  <div class="text-[19px] leading-[24px]">Activate Windows</div>
  <div class="text-[14px] leading-[20px] tracking-[0.180px]">Go to Settings to activate Windows.</div>
</div>

<script>
const tabs = [["yt","(549) H"],["cloud","Se"],["wa","(1) Wh"],["up","Upwor"],["fi","Seller D"],["in","(16) Fe"],["md","My De"],["globe","182.18"],["yh","consist"],["yh","consist"],["gm","Securit"]];
document.getElementById("tabs").innerHTML = tabs.map(([icon, label], i) => `
  <div class="${i === 1 ? "w-[100px] rounded-t-lg bg-[#cbdcf6]" : "w-[99px]"} relative h-full shrink-0 flex items-center pl-[11px]">
    <svg class="shrink-0 text-[#8b8e90]" width="16" height="16"><use href="#${icon}"/></svg>
    <div class="ml-[8px] w-[37px] overflow-hidden whitespace-nowrap tracking-[-0.450px] text-[#1e2c40] mask-r-from-65% mask-r-to-100%">${label}</div>
    ${i === 1 ? `<svg class="absolute left-[57px] top-[12px]" width="11" height="10" viewBox="0 0 11 10"><path d="M0 3.500H2.500L5 1V9L2.500 6.500H0Z" fill="#111"/><path d="M6.500 3V7M8.800 1.500V8.500" stroke="#111" stroke-width="1.100"/></svg>` : ""}
    <svg class="${i < 2 ? "ml-[7px]" : "ml-[6px]"}" width="10" height="10"><use href="#x"/></svg>
    ${i > 1 ? `<div class="absolute right-0 top-[7px] h-[20px] w-px bg-[#5d7ba8]"></div>` : ""}
  </div>`).join("");

const marks = [["yt","how to write urdu i...",14],["globe","New Tab",164],["yt","YouTube",250],["gh","GitHub - blynkkk/bl...",336],["dl","wqq",489],["hist","History",552],["globe","",630],["ms","Mail - Hassan Bashi...",662],["gm","Gmail",814],["yt","YouTube",885],["map","Maps",971],["news","News",1041],["tr","Translate",1110],["yt","english learning",1198]];
document.getElementById("marks").innerHTML = marks.map(([icon, label, x], i) => `
  <div class="flex items-center gap-[8px] shrink-0 text-[#1b1f23]" style="width:${(marks[i + 1] ? marks[i + 1][2] : 1337) - x}px">
    <svg class="shrink-0" width="16" height="16"><use href="#${icon}"/></svg>
    <span class="whitespace-nowrap text-[12px] tracking-[-0.270px] text-[#26364d]">${label}</span>
  </div>`).join("");

const lessons = [["play","Security Contexts (01:57)"],["quiz","Practice Test - Kubernetes - CKAD ..."],["play","Solutions-Security Contexts (06:12)"],["play","Resource Requirements (06:25)"],["quiz","Practice Test - Kubernetes - CKAD ..."],["play","Solutions-Resource Requirements (..."],["play","Service Account (14:34)"],["quiz","Practice Test - Kubernetes - CKAD ..."],["play","Solutions-Service Account (08:04)"],["quiz","Stay Updated!"]];
document.getElementById("side").innerHTML = lessons.map(([icon, label], i) => `
  <div class="${i === 0 ? "bg-[#e4e8ed]" : ""} h-[50px] shrink-0 flex items-center pl-[39px]">
    <svg class="mb-[2px]" width="20" height="20"><use href="#${icon}"/></svg>
    <div class="ml-[11px] w-[232px] text-[13px] tracking-[-0.250px] text-[#43536b] whitespace-nowrap">${label}</div>
    <div class="w-[19px] h-[18px] mb-[2px] rounded-full border-[1.5px] border-[#dcdee2]"></div>
  </div>`).join("");

document.getElementById("downs").innerHTML = Array.from({length: 5}, (_, i) => `
  <div class="${i === 0 ? "w-[237px] pl-[20px]" : "w-[233px] pl-[16px]"} h-[44px] flex items-center border-r border-[#8b9dbb]">
    <svg width="16" height="18"><use href="#zip"/></svg>
    <span class="ml-[13px] mt-[2px] w-[159px] whitespace-nowrap text-[12.500px] tracking-[-0.070px] text-[#1d2b40]">WhatsApp Unknow....zip</span>
    <svg width="10" height="7" viewBox="0 0 10 7"><path d="M1 6L5 2L9 6" stroke="#15202e" stroke-width="1.800" fill="none"/></svg>
  </div>`).join("");
</script>
</body>
</html>
